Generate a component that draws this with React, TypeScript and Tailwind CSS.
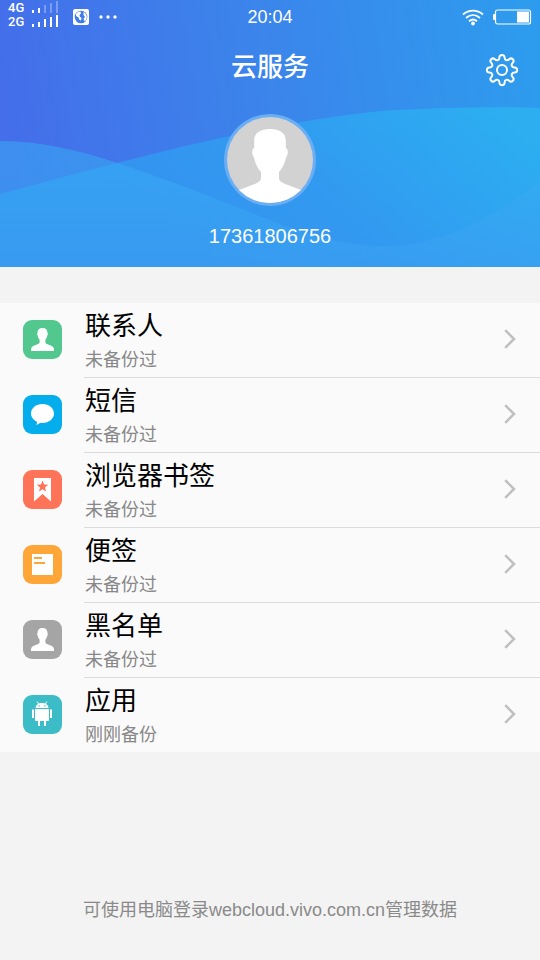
import type { ReactNode } from 'react';

interface BackupItem {
  id: string;
  title: string;
  status: string;
  icon: ReactNode;
}

function PersonShape() {
  return (
    <path
      fill="#fff"
      d="M19.500 8c3.300 0 5.100 1.900 5 5 .5.500.5 1.700-.2 2.600-.3 1.900-1 3.100-1.900 4.200v2.700c.2 1.200 2 1.800 4.600 2.700 2.800 1 4 2.200 4 4.300V31H8v-1.500c0-2.100 1.200-3.300 4-4.300 2.600-.9 4.400-1.500 4.600-2.700v-2.700c-.9-1.100-1.600-2.300-1.900-4.200-.7-.9-.7-2.100-.2-2.600-.1-3.100 1.700-5 5-5z"
    />
  );
}

function Tile({ color, children }: { color: string; children: ReactNode }) {
  return (
    <svg viewBox="0 0 39 39" className="mb-0.5 w-[39px] shrink-0" aria-hidden="true">
      <rect width="39" height="39" rx="9" fill={color} />
      {children}
    </svg>
  );
}

const items: BackupItem[] = [
  {
    id: 'contacts',
    title: '联系人',
    status: '未备份过',
    icon: (
      <Tile color="#52c78e">
        <PersonShape />
      </Tile>
    ),
  },
  {
    id: 'sms',
    title: '短信',
    status: '未备份过',
    icon: (
      <Tile color="#04aeec">
        <path
          fill="#fff"
          d="M19.500 9C26 9 31 13.200 31 18.600S26 28 19.500 28c-.8 0-1.600-.1-2.400-.2-1 1-2.200 1.800-3.800 2.100.6-.9.8-2 .6-3.200C10.400 25.200 8 22.200 8 18.600 8 13.200 13 9 19.500 9z"
        />
      </Tile>
    ),
  },
  {
    id: 'bookmarks',
    title: '浏览器书签',
    status: '未备份过',
    icon: (
      <Tile color="#ff7358">
        <path fill="#fff" d="M11 8h17v23.500L19.500 24 11 31.500z" />
        <path
          fill="#ff7358"
          d="M19.500 10.500l1.600 3.900 4.100.3-3.200 2.700 1 4.100-3.500-2.200-3.500 2.200 1-4.100-3.200-2.700 4.100-.3z"
        />
      </Tile>
    ),
  },
  {
    id: 'notes',
    title: '便签',
    status: '未备份过',
    icon: (
      <Tile color="#ffa638">
        <rect x="9" y="9" width="21" height="21" fill="#fff" />
        <path fill="#ffa638" d="M11 12h8v2h-8zM11 17h11v2H11z" />
      </Tile>
    ),
  },
  {
    id: 'blocklist',
    title: '黑名单',
    status: '未备份过',
    icon: (
      <Tile color="#a5a5a5">
        <PersonShape />
      </Tile>
    ),
  },
  {
    id: 'apps',
    title: '应用',
    status: '刚刚备份',
    icon: (
      <Tile color="#3bbcc6">
        <path stroke="#fff" strokeWidth="1" d="M14 6.500l2 3M24 6.500l-2 3" />
        <path fill="#fff" d="M12.500 13c.4-3.200 3-5 6.500-5s6.100 1.800 6.500 5z" />
        <path fill="#3bbcc6" d="M15.500 10.300h1.200v1.200h-1.200zM21.300 10.300h1.200v1.200h-1.200z" />
        <path
          fill="#fff"
          d="M12 14h14v11c0 .6-.4 1-1 1H13c-.6 0-1-.4-1-1zM9 14.500h2v8.500H9zM27 14.500h2v8.500h-2zM15 26h2v5h-2zM21 26h2v5h-2z"
        />
      </Tile>
    ),
  },
];

function SignalBars({ levels }: { levels: number }) {
  return (
    <svg viewBox="0 0 26 12" className="w-[26px]" fill="#fff" aria-hidden="true">
      {[3, 5, 8, 10, 12].map((h, i) => (
        <rect key={h} x={i * 6} y={12 - h} width="2" height={h} opacity={i < levels ? 1 : 0.3} />
      ))}
    </svg>
  );
}

function StatusBar() {
  return (
    <div className="grid h-[34px] grid-cols-3 items-center">
      <div className="flex items-center pl-2">
        <div className="flex gap-1 pb-1">
          <p className="w-5 font-['Roboto',sans-serif] text-[13px] leading-3.5 font-medium">
            4G
            <br />
            2G
          </p>
          <div className="flex flex-col gap-0.5">
            <SignalBars levels={2} />
            <SignalBars levels={5} />
          </div>
        </div>
        <svg viewBox="0 0 16 16" className="ml-[15px] w-4" aria-hidden="true">
          <rect width="16" height="16" rx="2" fill="#fff" />
          <circle cx="8" cy="8" r="6.300" fill="#3f7ce9" />
          <path
            fill="#fff"
            d="M3 5C4 3.200 6 2.300 7.500 2.600L8 4.500 6.500 6l.3 1.500L8.500 9 8 11.500 6.500 11 5.500 8.500 3 7zM10.500 3c2 .8 3.300 2.700 3.300 5s-.9 3.600-2.300 4.500L10.500 9.500 12 8l-1.500-2z"
          />
        </svg>
        <svg viewBox="0 0 18 4" className="ml-2.5 w-[18px]" fill="#fff" aria-hidden="true">
          <circle cx="2" cy="2" r="1.700" />
          <circle cx="9" cy="2" r="1.700" />
          <circle cx="16" cy="2" r="1.700" />
        </svg>
      </div>
      <time className="text-center text-lg">20:04</time>
      <div className="flex items-center justify-end gap-2 pr-2">
        <svg viewBox="0 0 22 17" className="w-[22px]" fill="none" stroke="#fff" strokeWidth="1.800" aria-hidden="true">
          <path d="M1 5.500c6-5.300 14-5.300 20 0M4 9c4.300-3.800 9.700-3.800 14 0M7 12.200c2.500-2.200 5.500-2.200 8 0" />
          <circle cx="11" cy="14.500" r="1.900" fill="#fff" stroke="none" />
        </svg>
        <svg viewBox="0 0 40 16" className="w-10" aria-hidden="true">
          <path fill="#fff" d="M3 5v6H2C1 11 1 10 1 8s0-3 1-3z" />
          <rect x="3.500" y="1" width="35" height="14" rx="2" fill="none" stroke="#fff" strokeWidth="1.200" />
          <rect x="25" y="2.500" width="12" height="11" fill="#fff" />
        </svg>
      </div>
    </div>
  );
}

function Waves() {
  return (
    <svg
      viewBox="0 0 540 267"
      preserveAspectRatio="none"
      className="absolute inset-0 h-full w-full"
      aria-hidden="true"
    >
      <defs>
        <linearGradient id="sky" gradientUnits="userSpaceOnUse" x1="0" y1="90" x2="530" y2="0">
          <stop offset="0" stopColor="#446eea" />
          <stop offset="0.5" stopColor="#3b85eb" />
          <stop offset="1" stopColor="#2d9cee" />
        </linearGradient>
        <linearGradient id="front" gradientUnits="userSpaceOnUse" x1="240" y1="290" x2="440" y2="60">
          <stop offset="0" stopColor="#3493f0" />
          <stop offset="0.4" stopColor="#3299f0" />
          <stop offset="1" stopColor="#2caef1" />
        </linearGradient>
        <linearGradient id="back" gradientUnits="userSpaceOnUse" x1="0" y1="140" x2="0" y2="267">
          <stop offset="0" stopColor="#37b0f4" stopOpacity="0.500" />
          <stop offset="1" stopColor="#3b9ff1" stopOpacity="0.600" />
        </linearGradient>
      </defs>
      <rect width="540" height="267" fill="url(#sky)" />
      <path
        fill="url(#front)"
        d="M0 194C40 183 78 173 117 163c39-10 75-19 113-27 50-11 100-20 150-25 50-3 110-5 160-3v159H0z"
      />
      <path
        fill="url(#back)"
        d="M0 141c40 0 78 9 117 22 55 18 110 40 163 61 40 14 70 22 105 22 55 0 115-30 155-66v87H0z"
      />
    </svg>
  );
}

function Avatar() {
  return (
    <svg viewBox="0 0 92 92" className="w-[92px]" role="img" aria-label="头像">
      <defs>
        <clipPath id="face">
          <circle cx="46" cy="46" r="43" />
        </clipPath>
      </defs>
      <circle cx="46" cy="46" r="46" fill="#6aaef4" />
      <g clipPath="url(#face)">
        <rect width="92" height="92" fill="#d2d2d2" />
        <path
          fill="#fff"
          d="M46 15c10 0 15.500 4 15.800 11v8c2.700.5 2.700 7 .2 9.500-1.500 7-4 11-7 14.500v6c0 2.500 2 4 5 5.500L77 76l8 16H7l8-16 17-6.500c3-1.500 5-3 5-5.500v-6c-3-3.500-5.500-7.500-7-14.500-2.500-2.500-2.500-9 .2-9.500v-8C30.500 19 36 15 46 15z"
        />
      </g>
    </svg>
  );
}

export default function App() {
  return (
    <div className="flex min-h-screen flex-col bg-[#f3f3f3] font-['Liberation_Sans','Noto_Sans_CJK_SC',sans-serif]">
      <header className="relative text-white">
        <Waves />
        <div className="relative">
          <StatusBar />
          <div className="grid h-[72px] grid-cols-3 items-center px-5">
            <h1 className="col-start-2 pb-1.5 text-center text-[26px] font-medium">云服务</h1>
            <button type="button" aria-label="设置" className="justify-self-end">
              <svg viewBox="0 0 36 36" className="w-9" fill="none" stroke="#fff" strokeWidth="2" strokeLinejoin="round">
                <circle cx="18" cy="18" r="5" />
                <path d="M15.400 5.500C15.400 2 20.600 2 20.600 5.500c0 2.800 2.600 3.700 4.500 1.800 2.700-2.400 6 1.200 3.600 3.600-1.900 1.900-1 4.500 1.800 4.500 3.500 0 3.500 5.200 0 5.200-2.800 0-3.700 2.600-1.800 4.500 2.400 2.400-.9 6-3.600 3.600-1.900-1.900-4.500-1-4.500 1.800 0 3.500-5.200 3.500-5.200 0 0-2.800-2.600-3.700-4.500-1.800-2.700 2.400-6-1.200-3.600-3.600 1.900-1.900 1-4.500-1.800-4.500-3.500 0-3.500-5.200 0-5.200 2.800 0 3.700-2.600 1.800-4.500-2.400-2.400.9-6 3.600-3.600 1.900 1.900 4.500 1 4.500-1.800z" />
              </svg>
            </button>
          </div>
          <div className="flex flex-col items-center gap-4 pt-2 pb-[17px]">
            <Avatar />
            <p className="text-xl">17361806756</p>
          </div>
        </div>
      </header>

      <main className="mt-9">
        <ul className="bg-[#fafafa]">
          {items.map((item) => (
            <li key={item.id} className="group">
              <a href={`#${item.id}`} className="flex items-center gap-[22px] pl-[23px]">
                {item.icon}
                <div className="flex flex-1 items-center justify-between border-b border-[#dcdcdc] pr-6 group-last:border-b-0">
                  <div className="pt-[5px] pb-px pl-px">
                    <h2 className="text-[26px] leading-9 text-black">{item.title}</h2>
                    <p className="text-lg leading-8 text-[#888]">{item.status}</p>
                  </div>
                  <svg viewBox="0 0 12 20" className="mb-0.5 w-3" fill="none" stroke="#c0c0c0" strokeWidth="2.600" aria-hidden="true">
                    <path d="M1.200 1.200L10 10l-8.800 8.800" />
                  </svg>
                </div>
              </a>
            </li>
          ))}
        </ul>
      </main>

      <footer className="mt-auto pb-9 text-center text-lg text-[#8a8a8a]">
        可使用电脑登录webcloud.vivo.com.cn管理数据
      </footer>
    </div>
  );
}
